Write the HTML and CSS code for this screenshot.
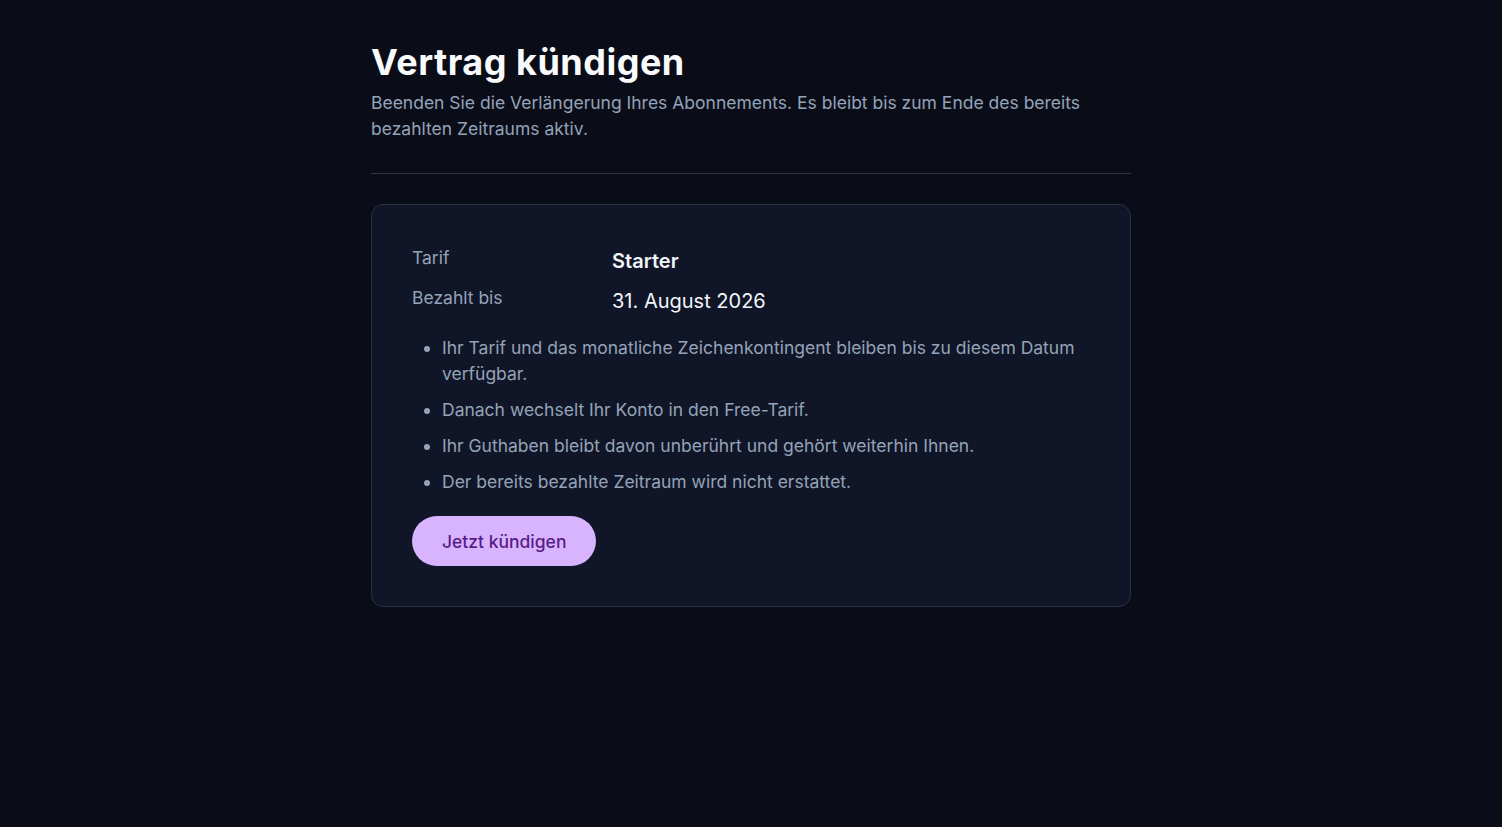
FILE: index.html
```html
<!DOCTYPE html>
<html lang="de">
<head>
<meta charset="utf-8">
<title>Vertrag kündigen</title>
<link rel="stylesheet" href="styles.css">
</head>
<body>
<main class="page">
  <header class="head">
    <h1 class="title">Vertrag kündigen</h1>
    <p class="subtitle">Beenden Sie die Verlängerung Ihres Abonnements. Es bleibt bis zum Ende des bereits bezahlten Zeitraums aktiv.</p>
  </header>
  <section class="card">
    <div class="row">
      <span class="label">Tarif</span>
      <span class="value strong">Starter</span>
    </div>
    <div class="row">
      <span class="label">Bezahlt bis</span>
      <span class="value">31. August 2026</span>
    </div>
    <ul class="notes">
      <li>Ihr Tarif und das monatliche Zeichenkontingent bleiben bis zu diesem Datum verfügbar.</li>
      <li>Danach wechselt Ihr Konto in den Free-Tarif.</li>
      <li>Ihr Guthaben bleibt davon unberührt und gehört weiterhin Ihnen.</li>
      <li>Der bereits bezahlte Zeitraum wird nicht erstattet.</li>
    </ul>
    <button class="btn" type="button">Jetzt kündigen</button>
  </section>
</main>
</body>
</html>
```

FILE: styles.css
```css
html, body {
  margin: 0;
  background: #0a0d18;
  font-family: Inter, "Noto Sans", sans-serif;
  color: #94a3b8;
}
.page {
  width: 760px;
  margin: 0 auto;
  padding-top: 42px;
}
.head {
  padding-bottom: 31px;
  border-bottom: 1px solid #2d3442;
}
.title {
  margin: 0;
  font-size: 36px;
  line-height: 40px;
  font-weight: 700;
  letter-spacing: 0.5px;
  color: #f8fafc;
}
.subtitle {
  margin: 8px 0 0;
  font-size: 17.5px;
  line-height: 26px;
  color: #94a3b8;
}
.card {
  margin-top: 30px;
  background: #101627;
  border: 1px solid #293042;
  border-radius: 12px;
  padding: 40px;
  display: flex;
  flex-direction: column;
  align-items: flex-start;
}
.row {
  display: grid;
  grid-template-columns: 200px 1fr;
  align-items: start;
  margin-bottom: 8px;
}
.label {
  font-size: 17.5px;
  line-height: 26px;
}
.value {
  font-size: 20px;
  line-height: 32px;
  color: #f1f5f9;
}
.strong {
  font-weight: 600;
}
.notes {
  margin: 10px 0 0;
  padding-left: 30px;
  font-size: 17.5px;
  line-height: 26px;
  display: flex;
  flex-direction: column;
  gap: 10px;
}
.btn {
  margin-top: 21px;
  height: 50px;
  padding: 0 30px;
  border: 0;
  border-radius: 25px;
  background: #d8b4fe;
  color: #581c87;
  font-family: inherit;
  font-size: 17.5px;
  font-weight: 500;
}
```
